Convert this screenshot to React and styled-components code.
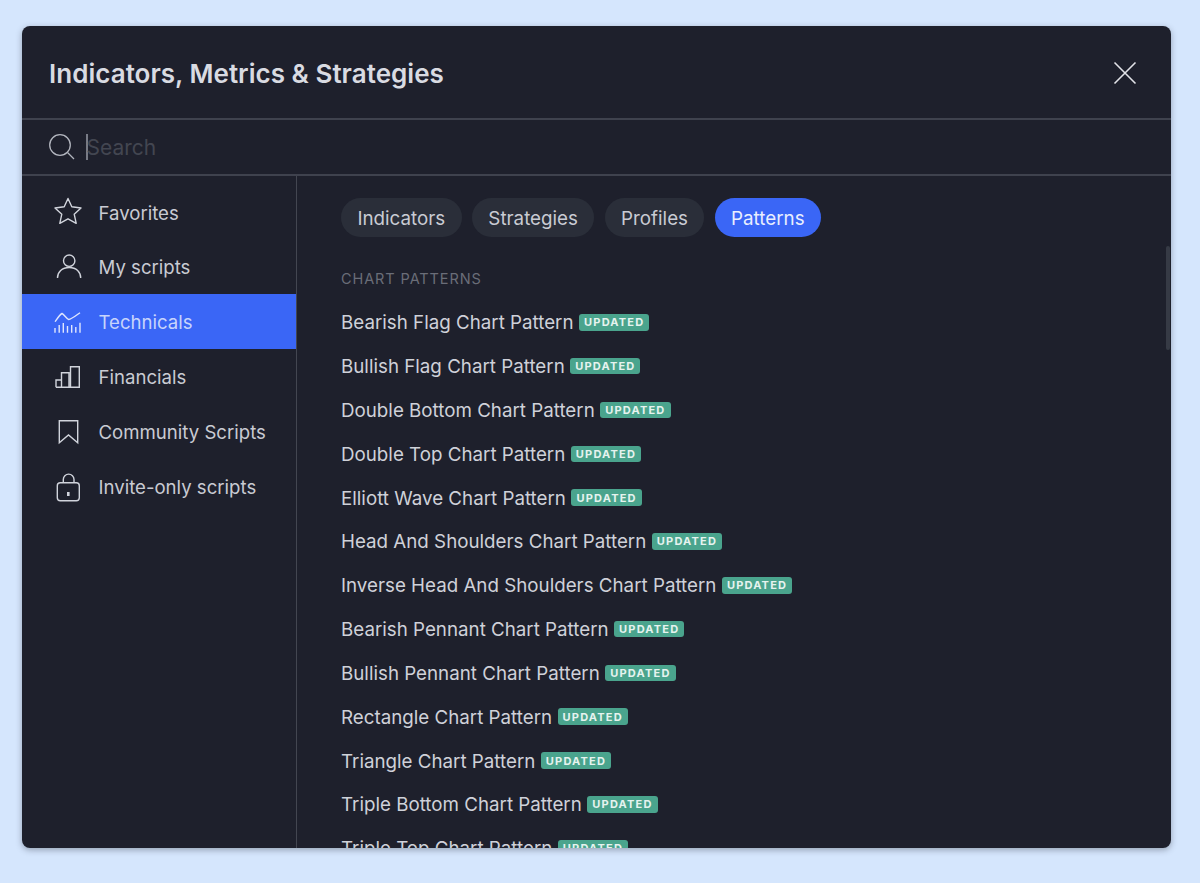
import React from 'react';
import styled, { createGlobalStyle } from 'styled-components';

const GlobalStyle = createGlobalStyle`
  html, body {
    margin: 0;
    height: 100%;
    background: #d5e6fd;
    font-family: Inter, "Liberation Sans", sans-serif;
    overflow: hidden;
  }
  * { box-sizing: border-box; }
`;

const Page = styled.div`
  height: 883px;
  padding: 26px 29px 35px 22px;
`;

const Modal = styled.div`
  position: relative;
  height: 100%;
  display: flex;
  flex-direction: column;
  overflow: hidden;
  background: #1e202c;
  border-radius: 8px;
  box-shadow: 0 2px 6px rgba(30, 34, 45, 0.35);
`;

const Header = styled.div`
  flex: none;
  height: 94px;
  display: flex;
  align-items: center;
  justify-content: space-between;
  padding: 2px 34px 0 27px;
  border-bottom: 2px solid #3f424e;
`;

const Title = styled.h1`
  margin: 0;
  font-size: 26px;
  font-weight: 600;
  letter-spacing: 0.03px;
  color: #d9dbe2;
`;

const CloseButton = styled.button`
  display: flex;
  padding: 0;
  border: none;
  background: transparent;
  color: #e2e3e8;
`;

const SearchBar = styled.div`
  flex: none;
  height: 56px;
  display: flex;
  align-items: center;
  gap: 11px;
  padding: 0 0 0 27px;
  border-bottom: 2px solid #3f424e;
  color: #b2b5be;
`;

const Caret = styled.span`
  width: 1.5px;
  height: 26px;
  margin-right: -12px;
  background: #787b86;
`;

const SearchInput = styled.div`
  font-size: 21px;
  color: #434651;
`;

const Body = styled.div`
  flex: 1;
  min-height: 0;
  display: flex;
`;

const Sidebar = styled.nav`
  flex: none;
  width: 275px;
  padding-top: 8.5px;
  border-right: 1.5px solid #434651;
`;

const NavItem = styled.div`
  height: 54.8px;
  display: flex;
  align-items: center;
  gap: 14.5px;
  padding: 1.5px 0 0 30px;
  font-size: 18.6px;
  color: ${props => (props.$active ? '#c7d4fb' : '#c9cbd3')};
  background: ${props => (props.$active ? '#3a66f6' : 'transparent')};

  svg {
    flex: none;
    color: ${props => (props.$active ? '#dfe6fd' : '#d1d4dc')};
  }
`;

const Content = styled.main`
  flex: 1;
  min-width: 0;
  padding: 22px 0 0 44px;
`;

const Tabs = styled.div`
  display: flex;
  gap: 10.3px;
`;

const Tab = styled.div`
  height: 39px;
  display: flex;
  align-items: center;
  padding: 1px 16.4px 0;
  border-radius: 20px;
  font-size: 18.8px;
  color: ${props => (props.$active ? '#e9eefe' : '#c9cbd3')};
  background: ${props => (props.$active ? '#3a66f6' : '#2a2e39')};
`;

const SectionLabel = styled.div`
  margin-top: 33px;
  font-size: 14.5px;
  letter-spacing: 0.9px;
  line-height: 18px;
  color: #6a6d78;
`;

const PatternList = styled.div`
  margin-top: 13px;
`;

const PatternRow = styled.div`
  height: 43.82px;
  display: flex;
  align-items: center;
  gap: 5.5px;
  font-size: 18.75px;
  color: #cfd1d9;
`;

const Badge = styled.span`
  height: 16.5px;
  display: flex;
  align-items: center;
  padding: 0 5px;
  margin-top: -1px;
  border-radius: 3px;
  font-size: 11px;
  font-weight: 700;
  letter-spacing: 1.2px;
  color: #e6f3ef;
  background: #4aa48d;
`;

const ScrollThumb = styled.div`
  position: absolute;
  top: 220px;
  right: 1px;
  width: 4px;
  height: 104px;
  border-radius: 2px;
  background: #363a45;
`;

const Icon = ({ children }) => (
  <svg width="32" height="32" viewBox="0 0 32 32" fill="none" stroke="currentColor" strokeWidth="1.4">
    {children}
  </svg>
);

const navItems = [
  {
    label: 'Favorites',
    icon: <path strokeLinejoin="round" d="M16 1.500l3.800 8.300 9.200 1.200-6.800 6.200 2 9.100-8.200-4.500-8.200 4.500 2-9.100L3 11l9.200-1.200z" />,
  },
  {
    label: 'My scripts',
    icon: (
      <>
        <circle cx="17.200" cy="9.700" r="5.700" />
        <path d="M5.500 27c0-6 4.500-10.500 11.700-10.500S28.700 21 28.700 27" />
      </>
    ),
  },
  {
    label: 'Technicals',
    active: true,
    icon: (
      <>
        <path d="M3 15.700C6 11.500 8 8.500 10 7.500c2 1 4 4.500 6.500 6C20 13 24 9.500 28 6.700" />
        <path d="M3 26.700V22M7.200 26.700V19M11.300 26.700V17M15.500 26.700V20M19.700 26.700V19M23.800 26.700V21M28 26.700V16.700" />
      </>
    ),
  },
  {
    label: 'Financials',
    icon: <path d="M4 26.300h23.300V5.700h-8.800v20.600M17 26.300V11.700H9.500v14.600M9.500 19H4v7.300" />,
  },
  {
    label: 'Community Scripts',
    icon: <path strokeLinejoin="miter" d="M7.300 4.700h18.400v22L16.500 19l-9.200 7.700z" />,
  },
  {
    label: 'Invite-only scripts',
    icon: (
      <>
        <rect x="5.300" y="11.700" width="22" height="18" rx="3" />
        <path d="M11.300 11.700V8.500a5.300 5.300 0 0 1 10.700 0v3.200" />
        <rect x="15" y="21" width="2.600" height="4" fill="currentColor" stroke="none" />
      </>
    ),
  },
];

const patterns = [
  'Bearish Flag Chart Pattern',
  'Bullish Flag Chart Pattern',
  'Double Bottom Chart Pattern',
  'Double Top Chart Pattern',
  'Elliott Wave Chart Pattern',
  'Head And Shoulders Chart Pattern',
  'Inverse Head And Shoulders Chart Pattern',
  'Bearish Pennant Chart Pattern',
  'Bullish Pennant Chart Pattern',
  'Rectangle Chart Pattern',
  'Triangle Chart Pattern',
  'Triple Bottom Chart Pattern',
  'Triple Top Chart Pattern',
];

const tabs = ['Indicators', 'Strategies', 'Profiles', 'Patterns'];

const App = () => (
  <Page>
    <GlobalStyle />
    <Modal>
      <Header>
        <Title>Indicators, Metrics &amp; Strategies</Title>
        <CloseButton aria-label="Close">
          <svg width="24" height="24" viewBox="0 0 24 24" fill="none" stroke="currentColor" strokeWidth="1.600">
            <path d="M1.500 1.500l21 21M22.500 1.500l-21 21" />
          </svg>
        </CloseButton>
      </Header>
      <SearchBar>
        <svg width="26" height="26" viewBox="0 0 26 26" fill="none" stroke="currentColor" strokeWidth="1.300">
          <circle cx="11" cy="11" r="10.300" />
          <path d="M18.500 18.500l6.500 6.500" />
        </svg>
        <Caret />
        <SearchInput>Search</SearchInput>
      </SearchBar>
      <Body>
        <Sidebar>
          {navItems.map(item => (
            <NavItem key={item.label} $active={item.active}>
              <Icon>{item.icon}</Icon>
              {item.label}
            </NavItem>
          ))}
        </Sidebar>
        <Content>
          <Tabs>
            {tabs.map(tab => (
              <Tab key={tab} $active={tab === 'Patterns'}>{tab}</Tab>
            ))}
          </Tabs>
          <SectionLabel>CHART PATTERNS</SectionLabel>
          <PatternList>
            {patterns.map(name => (
              <PatternRow key={name}>
                {name}
                <Badge>UPDATED</Badge>
              </PatternRow>
            ))}
          </PatternList>
        </Content>
      </Body>
      <ScrollThumb />
    </Modal>
  </Page>
);

export default App;
